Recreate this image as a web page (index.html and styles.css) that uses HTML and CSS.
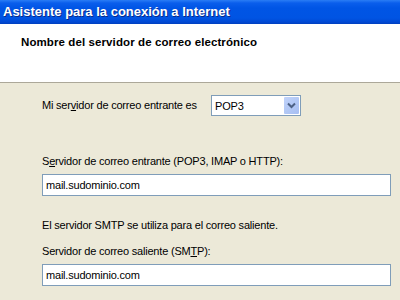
FILE: index.html
```html
<!DOCTYPE html>
<html>
<head>
  <meta charset="utf-8">
  <title>Asistente para la conexión a Internet</title>
  <link rel="stylesheet" href="styles.css">
</head>
<body>
  <div class="window">
    <!-- Title bar -->
    <div class="titlebar">Asistente para la conexión a Internet</div>

    <!-- Wizard page header -->
    <div class="header">
      <h1>Nombre del servidor de correo electrónico</h1>
    </div>

    <!-- Wizard page body -->
    <div class="content">
      <div class="row">
        <label>Mi ser<u>v</u>idor de correo entrante es</label>
        <div class="combo">
          <span class="combo-value">POP3</span>
          <span class="combo-btn">
            <svg width="9" height="7" viewBox="0 0 9 7"><path d="M1 1.5 L4.5 5 L8 1.5" fill="none" stroke="#4D6185" stroke-width="2"/></svg>
          </span>
        </div>
      </div>

      <div class="field first">
        <label>S<u>e</u>rvidor de correo entrante (POP3, IMAP o HTTP):</label>
        <div class="textbox">mail.sudominio.com</div>
      </div>

      <p class="note">El servidor SMTP se utiliza para el correo saliente.</p>

      <div class="field">
        <label>Servidor de correo saliente (SM<u>T</u>P):</label>
        <div class="textbox">mail.sudominio.com</div>
      </div>
    </div>
  </div>
</body>
</html>
```

FILE: styles.css
```css
body {
  margin: 0;
  font-family: "Liberation Sans", Tahoma, sans-serif;
  font-size: 11px;
  letter-spacing: -0.2px;
  background-color: #ECE9D8;
}
.window {
  width: 400px;
  height: 300px;
  overflow: hidden;
  display: flex;
  flex-direction: column;
}
.titlebar {
  height: 24px;
  line-height: 24px;
  padding-left: 3px;
  color: #fff;
  font-weight: bold;
  font-size: 13px;
  letter-spacing: 0;
  background: linear-gradient(#2A7DF5 0, #0A5EEC 3px, #0055E5 8px, #0054E3 18px, #0049D4 22px, #003FBE 24px);
  text-shadow: 1px 1px #0A2B8A;
}
.header {
  height: 58px;
  background: #fff;
  border-bottom: 1px solid #ACA899;
}
.header h1 {
  margin: 0;
  padding: 12px 0 0 21px;
  font-size: 11.5px;
  letter-spacing: 0.1px;
  line-height: 13px;
  font-weight: bold;
  color: #000;
}
.content {
  flex: 1;
  padding: 12px 9px 0 42px;
}
.row {
  display: flex;
  align-items: center;
}
.row label {
  width: 169px;
}
.combo {
  width: 88px;
  height: 19px;
  border: 1px solid #7F9DB9;
  background: #fff;
  display: flex;
  align-items: center;
}
.combo-value {
  flex: 1;
  padding-left: 3px;
}
.combo-btn {
  width: 15px;
  height: 17px;
  margin-right: 1px;
  background: linear-gradient(135deg, #C1D3FB, #B2C8F5 50%, #A7BEF2);
  border-radius: 1px;
  display: flex;
  align-items: center;
  justify-content: center;
}
.field {
  display: flex;
  flex-direction: column;
  gap: 6px;
}
.field.first {
  margin-top: 39px;
}
.textbox {
  height: 20px;
  line-height: 20px;
  border: 1px solid #7F9DB9;
  background: #fff;
  padding-left: 3px;
}
.note {
  margin: 23px 0 13px 0;
  line-height: 13px;
}
label {
  line-height: 13px;
}
```
